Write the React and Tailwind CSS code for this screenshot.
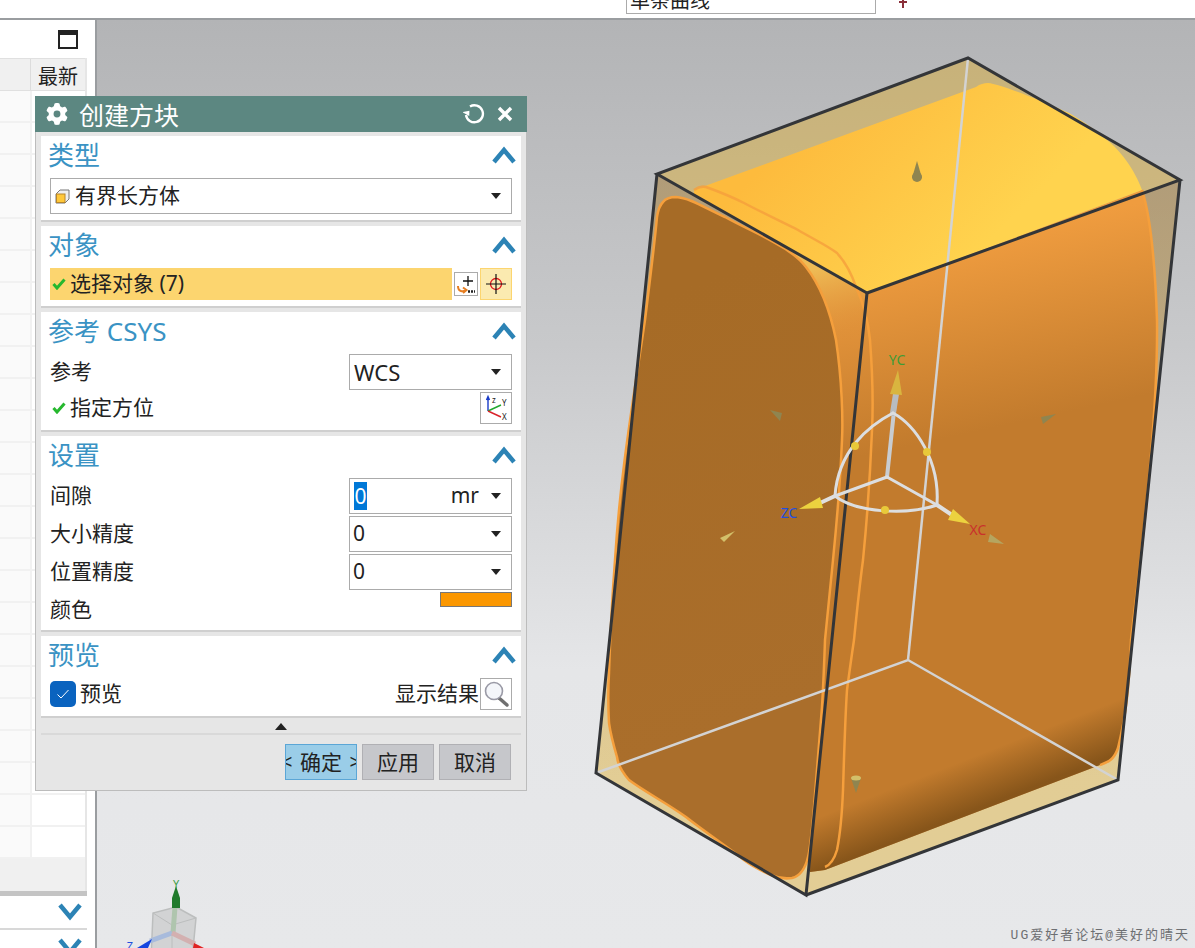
import { FaGear } from 'react-icons/fa6';

const rows = Array.from({ length: 24 });

const ChevronUp = () => (
  <svg width="24" height="18" viewBox="0 0 24 18" className="block">
    <path d="M2 16 L12 4 L22 16" fill="none" stroke="#2c83b5" strokeWidth="4.5" />
  </svg>
);

const ChevronDown = () => (
  <svg width="24" height="18" viewBox="0 0 24 18" className="block">
    <path d="M2 2 L12 14 L22 2" fill="none" stroke="#2c83b5" strokeWidth="4.5" />
  </svg>
);

const Caret = () => (
  <svg width="10" height="6" viewBox="0 0 10 6" className="block shrink-0">
    <path d="M0 0 H10 L5 6 Z" fill="#222" />
  </svg>
);

const Check = () => (
  <svg width="14" height="12" viewBox="0 0 14 12" className="block shrink-0">
    <path d="M1.5 6 L5 10 L12.5 1.5" fill="none" stroke="#26b82e" strokeWidth="3" />
  </svg>
);

const Section = ({ title, children }) => (
  <div className="bg-white border-b-2 border-[#cfcfcf] pb-[6px]">
    <div className="h-[42px] flex items-center justify-between pl-[7px] pr-[5px] pb-[5px]">
      <span className="text-[26px] leading-none text-[#3a93c4]">{title}</span>
      <ChevronUp />
    </div>
    <div className="px-[9px] flex flex-col gap-[2px]">{children}</div>
  </div>
);

const Combo = ({ children, className = '' }) => (
  <div className={`h-[36px] border border-[#ababab] bg-white flex items-center justify-between pr-[10px] text-[21px] text-[#222] ${className}`}>
    {children}
    <Caret />
  </div>
);

const Row = ({ label, children }) => (
  <div className="h-[36px] flex items-center justify-between text-[21px] text-[#222]">
    <span>{label}</span>
    {children}
  </div>
);

const FooterButton = ({ children }) => (
  <button className="w-[72px] h-[36px] border border-[#b0b0b4] bg-[#c6c7cb] text-[21px] leading-none text-[#222]">
    {children}
  </button>
);

const IconBox = ({ children, className = '' }) => (
  <div className={`w-[32px] h-[32px] border border-[#ababab] bg-white flex items-center justify-center shrink-0 ${className}`}>
    {children}
  </div>
);

const LeftPanel = () => (
  <div className="w-[97px] shrink-0 bg-white border-r-2 border-[#9a9da0] flex flex-col overflow-hidden">
    <div className="h-[38px] flex items-start justify-end pr-[17px] pt-[10px]">
      <div className="w-[20px] h-[19px] border-2 border-t-[5px] border-[#222]" />
    </div>
    <div className="w-[87px] border-r-2 border-[#e6e6e6]">
      <div className="h-[33px] flex bg-[#f0f0f0] border-y border-[#e0e0e0]">
        <div className="w-[31px] border-r border-[#dcdcdc]" />
        <div className="flex-1 text-[20px] leading-[35px] text-[#222] pl-[7px]">最新</div>
      </div>
      {rows.map((_, i) => (
        <div key={i} className="h-[32px] flex border-b-2 border-[#f1f1f1]">
          <div className="w-[32px] bg-[#fafafa] border-r-2 border-[#f1f1f1]" />
          <div className="flex-1" />
        </div>
      ))}
      <div className="h-[32px] bg-[#f0f0f0]" />
    </div>
    <div className="w-[87px] h-[5px] bg-[#c4c4c4]" />
    <div className="w-[87px] h-[35px] border-b-2 border-[#d8d8d8] flex items-center justify-end pr-[5px]">
      <ChevronDown />
    </div>
    <div className="w-[87px] h-[18px] flex items-start justify-end pr-[5px] pt-[8px]">
      <ChevronDown />
    </div>
  </div>
);

const Cone = ({ tip, a, b, fill = '#8f8550' }) => (
  <polygon points={`${tip} ${a} ${b}`} fill={fill} />
);

// Drawn in page coordinates so the points read straight off the screenshot
const Model = () => (
  <svg viewBox="97 20 1098 928" className="block w-full h-full">
    <defs>
      <linearGradient id="top" gradientUnits="userSpaceOnUse" x1="800" y1="130" x2="950" y2="280">
        <stop offset="0" stopColor="#fdbb3d" />
        <stop offset="1" stopColor="#ffd34e" />
      </linearGradient>
      <linearGradient id="right" gradientUnits="userSpaceOnUse" x1="990" y1="235" x2="1030" y2="420">
        <stop offset="0" stopColor="#ef9c3f" />
        <stop offset="1" stopColor="#c27b2d" />
      </linearGradient>
      <linearGradient id="shade" gradientUnits="userSpaceOnUse" x1="942" y1="769" x2="960" y2="815">
        <stop offset="0" stopColor="#6e4512" stopOpacity="0" />
        <stop offset="1" stopColor="#6e4512" stopOpacity="0.7" />
      </linearGradient>
      <linearGradient id="left" gradientUnits="userSpaceOnUse" x1="650" y1="300" x2="800" y2="700">
        <stop offset="0" stopColor="#a66b26" />
        <stop offset="1" stopColor="#aa6e2b" />
      </linearGradient>
      <linearGradient id="gold" gradientUnits="userSpaceOnUse" x1="830" y1="265" x2="850" y2="340">
        <stop offset="0" stopColor="#eebb55" />
        <stop offset="1" stopColor="#d88b36" stopOpacity="0" />
      </linearGradient>
      <linearGradient id="side" gradientUnits="userSpaceOnUse" x1="900" y1="180" x2="900" y2="780">
        <stop offset="0" stopColor="#6d5a6a" stopOpacity="0.28" />
        <stop offset="1" stopColor="#6d5a6a" stopOpacity="0" />
      </linearGradient>
    </defs>

    {/* translucent bounding block */}
    <polygon points="657,174 968,58 1180,180 1118,780 806,895 596,773" fill="#deae2f" fillOpacity="0.45" />
    <polygon points="657,174 867,293 806,895 596,773" fill="url(#side)" />
    <polygon points="867,293 1180,180 1118,780 806,895" fill="url(#side)" />

    {/* solid body */}
    <path d="M780,243 L867,293 L1142,190 C1150,215 1155,260 1157,320 C1158,400 1148,500 1131,640 C1129,690 1126,715 1118,748 C1114,760 1108,762 1100,765 L825,870 L810,872 Z" fill="url(#right)" />
    <path d="M830,300 L867,293 L1142,190 C1150,215 1155,260 1157,320 C1158,400 1148,500 1131,640 C1129,690 1126,715 1118,748 C1114,760 1108,762 1100,765 L825,870 L810,872 Z" fill="url(#shade)" />
    <path d="M694,195 L694,190 L976,87 C980,84 984,83 988,83 C1000,84 1040,100 1069,113 C1085,122 1098,132 1107,140 C1120,150 1135,170 1142,190 L867,293 Z" fill="url(#top)" />
    <path d="M780,243 L867,293 L872,340 L830,340 C825,300 800,262 780,243 Z" fill="url(#gold)" />
    <path d="M663,202 C666,198 670,197 676,197 C690,198 705,208 725,217 C745,228 760,234 775,243 C790,251 800,259 806,267 C820,285 830,310 836,340 C842,380 843,420 842,440 C840,490 836,530 833,560 C830,590 827,620 825,640 C824,670 823,690 822,707 C819,745 816,780 814,807 C812,830 810,850 808,857 C805,870 800,876 792,878 C785,879 778,878 771,875 C762,871 752,866 744,860 C725,845 705,832 686,817 C665,802 645,792 629,780 C622,772 618,765 617,757 C612,740 610,730 609,723 C608,705 608,690 609,673 C610,640 612,600 615,560 C620,480 630,420 645,320 C650,280 655,240 657,217 C658,210 660,205 663,202 Z" fill="url(#left)" stroke="#f59f3c" strokeWidth="2.5" />

    {/* rim curves */}
    <g fill="none" stroke="#f59f3c" strokeWidth="2.5">
      <path d="M694,190 C698,187 702,186 706,187 C720,192 732,197 744,203 C765,214 782,222 798,230 C815,240 828,246 837,253 C847,264 852,275 856,287" strokeOpacity="0.8" />
      <path d="M856,287 C862,300 868,320 870,340 C873,380 873,410 872,430 C870,480 866,530 863,560 C859,590 856,620 854,640 C851,660 849,675 847,690 C845,720 844,760 843,790 C842,815 840,835 837,850 C834,860 830,865 825,867" />
      <path d="M1142,190 C1150,215 1155,260 1157,320 C1158,400 1148,500 1131,640 C1129,690 1126,715 1118,748 C1114,760 1108,762 1100,765" />
    </g>

    {/* hidden edges of the block */}
    <g fill="none" stroke="#d3d3d3" strokeWidth="2.5">
      <path d="M968,58 L908,660" />
      <path d="M596,773 L908,660 L1118,780" />
    </g>

    {/* handles on the faces */}
    <Cone tip="917,161" a="912,178" b="922,178" />
    <circle cx="917" cy="177" r="5" fill="#8f8550" />
    <Cone tip="770,410" a="782,413" b="780,421" />
    <Cone tip="1056,414" a="1041,417" b="1043,424" />
    <Cone tip="735,531" a="720,538" b="724,542" fill="#d3c06a" />
    <Cone tip="1004,544" a="990,534" b="988,542" fill="#b5a560" />
    <Cone tip="856,793" a="851,778" b="861,778" />
    <ellipse cx="856" cy="778" rx="5" ry="2.5" fill="#d3c06a" />

    {/* visible edges of the block */}
    <g fill="none" stroke="#333538" strokeWidth="3" strokeLinejoin="miter">
      <path d="M867,293 L657,174 L968,58 L1180,180 Z" />
      <path d="M657,174 L596,773 L806,895 L867,293" />
      <path d="M1180,180 L1118,780 L806,895" />
    </g>

    {/* datum triad */}
    <g fill="none" strokeLinecap="round">
      <path d="M887,477 L896,392" stroke="#c8ccd0" strokeWidth="4" />
      <path d="M893,413 L896,394" stroke="#b8bcc0" strokeWidth="6" />
      <path d="M835,496 L820,503" stroke="#dfe0e0" strokeWidth="4" />
      <path d="M937,505 L952,515" stroke="#dfe0e0" strokeWidth="4" />
      <g stroke="#dcdee0" strokeWidth="3">
        <path d="M893,413 C870,425 838,450 835,496" />
        <path d="M893,413 C915,425 940,460 937,505" />
        <path d="M835,496 C855,512 905,516 937,505" />
        <path d="M887,477 L835,496" />
        <path d="M887,477 L937,505" />
      </g>
    </g>
    <polygon points="898,370 890,394 902,395" fill="#d9b53f" />
    <polygon points="799,509 820,497 823,508" fill="#ecd23f" />
    <polygon points="970,524 953,509 948,520" fill="#ecd23f" />
    <circle cx="855" cy="446" r="4" fill="#e8c93a" />
    <circle cx="927" cy="452" r="4" fill="#e8c93a" />
    <circle cx="885" cy="510" r="4" fill="#e8c93a" />
    <text x="897" y="365" textAnchor="middle" fontSize="14" fill="#3f9b35">YC</text>
    <text x="789" y="518" textAnchor="middle" fontSize="14" fill="#1f4fe0">ZC</text>
    <text x="978" y="535" textAnchor="middle" fontSize="14" fill="#c9302c">XC</text>

    {/* view triad */}
    <polygon points="176,907 196,918 192,960 151,960 153,913" fill="#c9cbcb" fillOpacity="0.7" stroke="#bcbebe" strokeWidth="1.5" />
    <path d="M153,913 L172,925 L196,918 M172,925 L172,960" fill="none" stroke="#bcbebe" strokeWidth="1" />
    <path d="M175,907 L173,933" stroke="#afc5ae" strokeWidth="5" />
    <path d="M172,933 L150,941" stroke="#a8bbdc" strokeWidth="5" />
    <path d="M172,933 L195,944" stroke="#d3b0b0" strokeWidth="5" />
    <path d="M176,886 L180,898 V908 H172 V898 Z" fill="#1f7a2b" />
    <path d="M152,939 L137,948 L148,948 Z" fill="#1546e0" />
    <path d="M194,943 L204,948 L193,948 Z" fill="#e02222" />
    <text x="176" y="888" textAnchor="middle" fontSize="11" fill="#3fa04a">Y</text>
    <text x="130" y="950" textAnchor="middle" fontSize="11" fill="#1f4fe0">Z</text>
  </svg>
);

const CreateBlockDialog = () => (
  <div className="absolute left-[35px] top-[96px] w-[492px] h-[695px] bg-[#e6e6e6] border-x border-b border-[#bcbcbc] flex flex-col">
    <div className="h-[36px] -mx-px bg-[#5c8781] flex items-center justify-between pl-[11px] pr-[14px] shrink-0">
      <div className="flex items-center gap-[11px]">
        <FaGear className="text-white" size={22} />
        <span className="text-[25px] leading-none text-white pt-[2px]">创建方块</span>
      </div>
      <div className="flex items-center gap-[12px]">
        <svg width="22" height="22" viewBox="0 0 22 22" className="block">
          <path d="M7 3.5 A8.5 8.5 0 1 1 3 12" fill="none" stroke="#fff" strokeWidth="2.4" />
          <path d="M0 8 L7 9 L5 14 Z" fill="#fff" transform="rotate(-20 3 10)" />
        </svg>
        <svg width="16" height="16" viewBox="0 0 16 16" className="block">
          <path d="M2 2 L14 14 M14 2 L2 14" stroke="#fff" strokeWidth="3.4" />
        </svg>
      </div>
    </div>

    <div className="pt-[4px] pl-[5px] pr-[5px] flex flex-col gap-[4px]">
      <Section title="类型">
        <Combo className="pl-[4px]">
          <span className="flex items-center gap-[5px]">
            <svg width="15" height="15" viewBox="0 0 15 15" className="block">
              <path d="M1 5 L5 1 H14 V10 L10 14 H1 Z" fill="#eee" stroke="#777" />
              <rect x="1.5" y="5" width="8.5" height="8.5" fill="#ffc83a" stroke="#b8862a" />
            </svg>
            有界长方体
          </span>
        </Combo>
      </Section>

      <Section title="对象">
        <div className="h-[32px] flex items-center text-[21px] text-[#222]">
          <div className="w-[402px] h-full bg-[#fcd56f] flex items-center gap-[4px] pl-[2px]">
            <Check />
            选择对象 (7)
          </div>
          <div className="ml-[2px] w-[24px] h-[24px] border border-[#ababab] bg-white shrink-0">
            <svg width="22" height="22" viewBox="0 0 22 22" className="block">
              <path d="M13 3 V13 M8 8 H18" stroke="#111" strokeWidth="1.3" />
              <path d="M3 13 C3 19 8 19 11 17 M8 14.5 L11.5 17 L8 20" fill="none" stroke="#e67e22" strokeWidth="2" />
              <path d="M13 18.5 H20" stroke="#222" strokeWidth="2.5" strokeDasharray="2 1" />
            </svg>
          </div>
          <div className="ml-[2px] w-[32px] h-[32px] border border-[#fcd56f] bg-[#fbeab0] shrink-0 flex items-center justify-center">
            <svg width="22" height="22" viewBox="0 0 22 22" className="block">
              <circle cx="11" cy="11" r="5.5" fill="none" stroke="#e0141c" strokeWidth="1.3" />
              <path d="M11 1 V21 M1 11 H21" stroke="#111" strokeWidth="1.2" />
            </svg>
          </div>
        </div>
      </Section>

      <Section title="参考 CSYS">
        <Row label="参考">
          <Combo className="w-[163px] pl-[4px]">
            <span className="text-[22px]">WCS</span>
          </Combo>
        </Row>
        <div className="h-[32px] flex items-center justify-between text-[21px] text-[#222]">
          <span className="flex items-center gap-[4px] pl-[2px]">
            <Check />
            指定方位
          </span>
          <IconBox>
            <svg width="28" height="28" viewBox="0 0 28 28" className="block">
              <path d="M6 17 V4 M4.5 6 L6 2.5 L7.5 6" fill="none" stroke="#1a3cc8" strokeWidth="1.4" />
              <path d="M6 17 L19 11" stroke="#1fa82e" strokeWidth="1.4" />
              <path d="M6 17 L19 23" stroke="#d8222a" strokeWidth="1.4" />
              <text x="10" y="9" fontSize="8" fill="#222">z</text>
              <text x="20" y="12" fontSize="8" fill="#222">Y</text>
              <text x="20" y="26" fontSize="8" fill="#222">X</text>
            </svg>
          </IconBox>
        </div>
      </Section>

      <Section title="设置">
        <Row label="间隙">
          <Combo className="w-[163px] pl-[4px]">
            <span className="flex-1 flex items-center justify-between pr-[12px]">
              <span className="w-[13px] h-[28px] bg-[#0078d7] text-white leading-[28px] text-center">0</span>
              <span>mr</span>
            </span>
          </Combo>
        </Row>
        <Row label="大小精度">
          <Combo className="w-[163px] pl-[3px]">
            <span>0</span>
          </Combo>
        </Row>
        <Row label="位置精度">
          <Combo className="w-[163px] pl-[3px]">
            <span>0</span>
          </Combo>
        </Row>
        <div className="h-[32px] flex items-start justify-between text-[21px] text-[#222]">
          <span className="leading-[34px]">颜色</span>
          <div className="w-[72px] h-[15px] bg-[#fb9700] border border-[#777]" />
        </div>
      </Section>

      <Section title="预览">
        <div className="h-[32px] flex items-center justify-between text-[21px] text-[#222]">
          <span className="flex items-center gap-[4px]">
            <span className="w-[26px] h-[26px] rounded-[5px] bg-[#0a63bf] flex items-center justify-center">
              <svg width="14" height="12" viewBox="0 0 14 12" className="block">
                <path d="M1.5 6.5 L5 10 L12.5 2" fill="none" stroke="#fff" strokeWidth="1" />
              </svg>
            </span>
            预览
          </span>
          <span className="flex items-center gap-[1px]">
            显示结果
            <IconBox>
              <svg width="28" height="28" viewBox="0 0 28 28" className="block">
                <path d="M17 18 L25 25" stroke="#6f6f6f" strokeWidth="3.5" strokeLinecap="round" />
                <circle cx="12" cy="11" r="8.5" fill="#f4f6fa" stroke="#9a9aa6" strokeWidth="1.6" />
              </svg>
            </IconBox>
          </span>
        </div>
      </Section>
    </div>

    <div className="mx-[5px] h-[17px] border-b-2 border-[#d9d9d9] flex items-center justify-center pt-[2px]">
      <svg width="12" height="7" viewBox="0 0 12 7" className="block">
        <path d="M0 7 L6 0 L12 7 Z" fill="#222" />
      </svg>
    </div>

    <div className="flex justify-end gap-[5px] pt-[9px] pr-[15px]">
      <button className="w-[72px] h-[36px] border border-[#5ba6d6] bg-[#9acde8] text-[21px] leading-none text-[#222] flex items-center justify-between overflow-hidden">
        <span className="-ml-[5px] text-[20px]">&lt;</span>
        <span>确定</span>
        <span className="-mr-[5px] text-[20px]">&gt;</span>
      </button>
      <FooterButton>应用</FooterButton>
      <FooterButton>取消</FooterButton>
    </div>
  </div>
);

const App = () => {
  return (
    <div className="relative w-[1195px] h-[948px] overflow-hidden flex flex-col bg-white font-['Noto_Sans','Noto_Sans_CJK_SC',sans-serif]">
      <div className="h-[20px] shrink-0 bg-white border-b-2 border-[#9a9da0] flex items-start">
        <div className="ml-[626px] w-[250px] h-[14px] border-x border-b border-[#ababab] overflow-hidden flex items-end">
          <span className="pl-[3px] text-[20px] leading-[26px] -mb-[1px] text-[#222] whitespace-nowrap">单条曲线</span>
        </div>
        <svg width="12" height="8" viewBox="0 0 12 8" className="block ml-[21px]">
          <path d="M6 0 V8 M2 2 H10" stroke="#8a2f3a" strokeWidth="2" />
        </svg>
      </div>

      <div className="flex-1 flex min-h-0">
        <LeftPanel />
        <div className="flex-1 min-w-0 bg-[linear-gradient(#b3b4b6,#c8c9cb_35%,#e5e6e8_70%,#e7e8ea)]">
          <Model />
        </div>
      </div>

      <CreateBlockDialog />

      <span className="absolute right-[5px] bottom-[3px] text-[13px] tracking-[2px] text-[#6d6f72] font-['Liberation_Mono','Noto_Sans_CJK_SC',monospace]">
        UG爱好者论坛@美好的晴天
      </span>
    </div>
  );
};

export default App;
